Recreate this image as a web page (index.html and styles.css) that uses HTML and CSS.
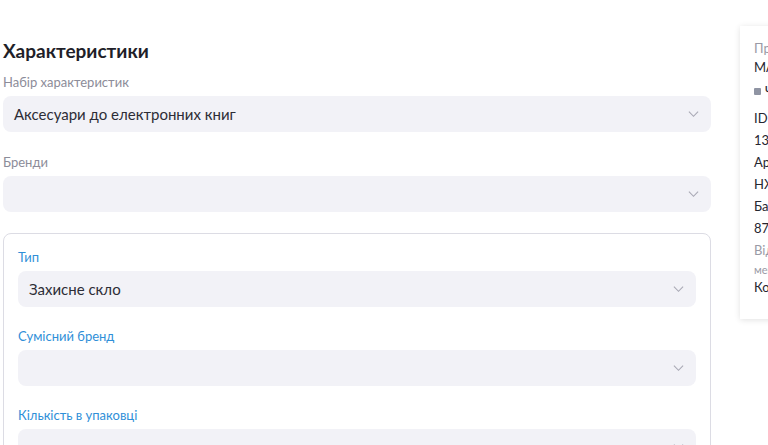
FILE: index.html
```html
<!DOCTYPE html>
<html lang="uk">
<head>
    <meta charset="UTF-8">
    <meta name="viewport" content="width=device-width, initial-scale=1.0">
    <title>Характеристики</title>
    <link rel="stylesheet" href="styles.css">
</head>
<body>
    <div class="page">
        <div class="main">
            <h2 class="title">Характеристики</h2>

            <div class="field">
                <label class="label">Набір характеристик</label>
                <div class="select">
                    <span class="value">Аксесуари до електронних книг</span>
                    <svg class="chevron" viewBox="0 0 12 8"><path d="M1 1.5l5 5 5-5"/></svg>
                </div>
            </div>

            <div class="field">
                <label class="label">Бренди</label>
                <div class="select">
                    <span class="value"></span>
                    <svg class="chevron" viewBox="0 0 12 8"><path d="M1 1.5l5 5 5-5"/></svg>
                </div>
            </div>

            <div class="card">
                <div class="field">
                    <label class="label blue">Тип</label>
                    <div class="select">
                        <span class="value">Захисне скло</span>
                        <svg class="chevron" viewBox="0 0 12 8"><path d="M1 1.5l5 5 5-5"/></svg>
                    </div>
                </div>
                <div class="field">
                    <label class="label blue">Сумісний бренд</label>
                    <div class="select">
                        <span class="value"></span>
                        <svg class="chevron" viewBox="0 0 12 8"><path d="M1 1.5l5 5 5-5"/></svg>
                    </div>
                </div>
                <div class="field">
                    <label class="label blue">Кількість в упаковці</label>
                    <div class="select">
                        <span class="value"></span>
                        <svg class="chevron" viewBox="0 0 12 8"><path d="M1 1.5l5 5 5-5"/></svg>
                    </div>
                </div>
            </div>
        </div>

        <aside class="side">
            <div class="muted">Продавець</div>
            <div class="row tight">МАГАЗИН</div>
            <div class="row status"><span class="dot"></span>Чернетка</div>
            <div class="row">ID товару</div>
            <div class="row">1384</div>
            <div class="row">Артикул</div>
            <div class="row">НХ-2031</div>
            <div class="row">Баркод</div>
            <div class="row">8712</div>
            <div class="muted">Відповідальний</div>
            <div class="muted small">менеджер</div>
            <div class="row tight">Коваленко</div>
        </aside>
    </div>
</body>
</html>
```

FILE: styles.css
```css
body {
    margin: 0;
    font-family: 'Lato', 'Noto Sans', sans-serif;
    color: #262630;
    background: #fff;
    overflow: hidden;
}
.page {
    display: flex;
    align-items: flex-start;
    gap: 29px;
    padding: 26px 0 0 3px;
}
.main {
    width: 708px;
    flex-shrink: 0;
}
.title {
    margin: 13px 0 0;
    font-size: 19px;
    font-weight: 700;
    line-height: 24px;
    color: #1f1f29;
}
.field {
    margin-top: 10px;
}
.field + .field {
    margin-top: 21px;
}
.label {
    display: block;
    font-size: 13px;
    line-height: 18px;
    color: #8c8c99;
    margin-bottom: 5px;
}
.label.blue {
    color: #2f8fd8;
}
.select {
    display: flex;
    align-items: center;
    justify-content: space-between;
    height: 36px;
    padding: 0 12px 0 11px;
    background: #f2f2f7;
    border-radius: 8px;
}
.value {
    font-size: 15px;
    color: #2d2d36;
}
.chevron {
    width: 11px;
    height: 8px;
    fill: none;
    stroke: #a9a9b5;
    stroke-width: 1.2;
}
.card {
    margin-top: 21px;
    border: 1px solid #dcdce4;
    border-radius: 8px;
    padding: 6px 14px 20px;
}
.card .field:first-child {
    margin-top: 8px;
}
.card .field + .field {
    margin-top: 20px;
}
.side {
    width: 200px;
    flex-shrink: 0;
    padding: 11px 14px 24px;
    background: #fff;
    box-shadow: 0 1px 6px rgba(0, 0, 0, 0.12);
    font-size: 13px;
    line-height: 22px;
    white-space: nowrap;
}
.muted {
    color: #9a9aa6;
}
.small {
    font-size: 11px;
    line-height: 18px;
}
.row.tight {
    line-height: 16px;
}
.status {
    margin: 5px 0 5px;
    display: flex;
    align-items: center;
    gap: 4px;
}
.dot {
    width: 7px;
    height: 7px;
    border-radius: 1px;
    background: #8f94a3;
}
```
